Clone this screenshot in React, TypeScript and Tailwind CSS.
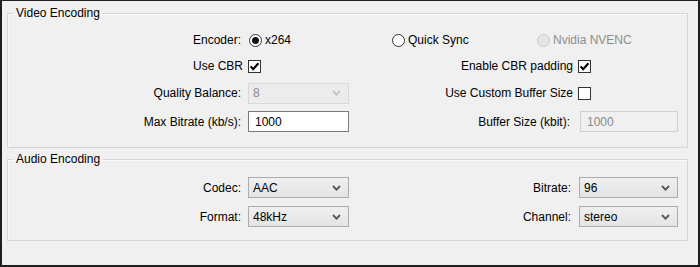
import React from "react"

function Check({ checked }: { checked: boolean }) {
  return (
    <span className="w-[13px] h-[13px] shrink-0 border border-[#333] bg-white flex items-center justify-center">
      {checked && (
        <svg width="11" height="11" viewBox="0 0 11 11">
          <path d="M1.6 5.4 L4.2 8.2 L9.4 2.2" stroke="#000" strokeWidth="2.1" fill="none" />
        </svg>
      )}
    </span>
  )
}

function Radio({ checked, disabled }: { checked?: boolean; disabled?: boolean }) {
  return (
    <span
      className={`w-[13px] h-[13px] shrink-0 rounded-full border flex items-center justify-center ${
        disabled ? "border-[#c9c9c9] bg-[#e6e6e6]" : "border-[#333] bg-white"
      }`}
    >
      {checked && <span className="w-[7px] h-[7px] rounded-full bg-[#111]" />}
    </span>
  )
}

function Chevron({ disabled }: { disabled?: boolean }) {
  return (
    <svg width="9" height="6" viewBox="0 0 9 6" className="shrink-0">
      <path d="M1 1 L4.5 4.6 L8 1" stroke={disabled ? "#c4c4c4" : "#555"} strokeWidth="1.8" fill="none" />
    </svg>
  )
}

function Combo({ value, disabled, w }: { value: string; disabled?: boolean; w: string }) {
  return (
    <div
      className={`${w} h-[21px] shrink-0 border flex items-center justify-between pl-[4px] pr-[7px] ${
        disabled
          ? "border-[#d9d9d9] bg-[#ececec] text-[#8a8a8a]"
          : "border-[#acacac] bg-gradient-to-b from-[#f0f0f0] to-[#e4e4e4] text-black"
      }`}
    >
      <span>{value}</span>
      <Chevron disabled={disabled} />
    </div>
  )
}

function Field({ value, disabled, w }: { value: string; disabled?: boolean; w: string }) {
  return (
    <div
      className={`${w} h-[21px] shrink-0 border flex items-center pl-[6px] ${
        disabled ? "border-[#cfcfcf] bg-[#f0f0f0] text-[#8a8a8a]" : "border-[#7a7a7a] bg-white text-black"
      }`}
    >
      {value}
    </div>
  )
}

function Group({ title, className, children }: { title: string; className: string; children: React.ReactNode }) {
  return (
    <fieldset className={`ml-[5px] w-[681px] border border-[#d6d6d6] shadow-[inset_1px_1px_0_#fafafa] ${className}`}>
      <legend className="ml-[5px] px-[3px] leading-[14px]">{title}</legend>
      {children}
    </fieldset>
  )
}

export default function App() {
  return (
    <div className="w-[700px] h-[267px] box-border bg-[#f0f0f0] border-t border-l-2 border-r-2 border-b-2 border-[#1e1e1e] text-[12px] text-black font-['Liberation_Sans',Arial,sans-serif] overflow-hidden">
      <Group title="Video Encoding" className="mt-[5px] h-[142px] pt-[10px]">
        {/* encoder */}
        <div className="flex items-center h-[20px]">
          <span className="w-[233px] text-right">Encoder:</span>
          <div className="w-[151px] pl-[8px] flex items-center gap-[3px]">
            <Radio checked />
            <span>x264</span>
          </div>
          <div className="w-[145px] flex items-center gap-[3px]">
            <Radio />
            <span>Quick Sync</span>
          </div>
          <div className="flex items-center gap-[3px] text-[#8d8d8d]">
            <Radio disabled />
            <span>Nvidia NVENC</span>
          </div>
        </div>

        <div className="flex items-center h-[20px] mt-[6px]">
          <span className="w-[235px] text-right">Use CBR</span>
          <span className="ml-[5px]"><Check checked /></span>
          <span className="w-[312px] text-right">Enable CBR padding</span>
          <span className="ml-[5px]"><Check checked /></span>
        </div>

        <div className="flex items-center h-[20px] mt-[7px]">
          <span className="w-[233px] text-right">Quality Balance:</span>
          <span className="ml-[7px]"><Combo value="8" disabled w="w-[101px]" /></span>
          <span className="w-[224px] text-right">Use Custom Buffer Size</span>
          <span className="ml-[5px]"><Check checked={false} /></span>
        </div>

        <div className="flex items-center h-[21px] mt-[8px]">
          <span className="w-[233px] text-right">Max Bitrate (kb/s):</span>
          <span className="ml-[7px]"><Field value="1000" w="w-[101px]" /></span>
          <span className="w-[221px] text-right">Buffer Size (kbit):</span>
          <span className="ml-[10px]"><Field value="1000" disabled w="w-[98px]" /></span>
        </div>
      </Group>

      <Group title="Audio Encoding" className="mt-[4px] h-[89px] pt-[11px]">
        <div className="flex items-center h-[21px]">
          <span className="w-[233px] text-right">Codec:</span>
          <span className="ml-[7px]"><Combo value="AAC" w="w-[101px]" /></span>
          <span className="w-[222px] text-right">Bitrate:</span>
          <span className="ml-[8px]"><Combo value="96" w="w-[99px]" /></span>
        </div>
        <div className="flex items-center h-[21px] mt-[8px]">
          <span className="w-[233px] text-right">Format:</span>
          <span className="ml-[7px]"><Combo value="48kHz" w="w-[101px]" /></span>
          <span className="w-[222px] text-right">Channel:</span>
          <span className="ml-[8px]"><Combo value="stereo" w="w-[99px]" /></span>
        </div>
      </Group>
    </div>
  )
}
